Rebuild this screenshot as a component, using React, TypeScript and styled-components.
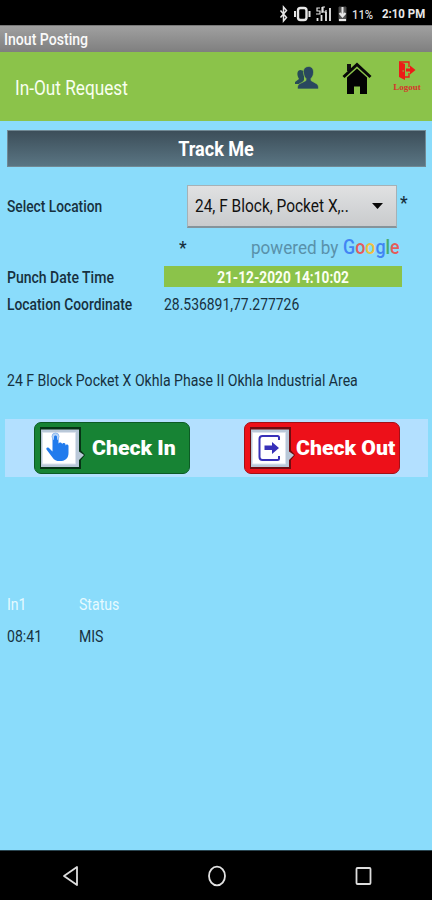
import React from "react";
import styled, { createGlobalStyle } from "styled-components";

const GlobalStyle = createGlobalStyle`
  * { box-sizing: border-box; }
  body { margin: 0; background: #8adcfb; font-family: Roboto, "Liberation Sans", sans-serif; }
  svg { display: block; flex: none; }
`;

const Screen = styled.div`
  width: 432px;
  height: 900px;
  display: flex;
  flex-direction: column;
  background: #8adcfb;
  overflow: hidden;
`;

/* Condensed label: the type is narrower than the regular Roboto cut. */
const Label = styled.span<{
  $size: number;
  $fit: number;
  $weight?: number;
  $color?: string;
  $origin?: string;
}>`
  display: inline-block;
  white-space: nowrap;
  line-height: 1.2;
  font-size: ${(p) => p.$size}px;
  font-weight: ${(p) => p.$weight ?? 400};
  color: ${(p) => p.$color ?? "#17313f"};
  transform: scaleX(${(p) => p.$fit});
  transform-origin: ${(p) => p.$origin ?? "left"} center;
`;

const StatusBar = styled.div`
  height: 25px;
  flex: none;
  background: #000;
  display: flex;
  align-items: center;
  padding: 2px 0 0 278px;
`;
const StatusText = styled.div<{ $w: number }>`
  width: ${(p) => p.$w}px;
  padding-left: 2px;
`;
const TitleBar = styled.div`
  height: 27px;
  flex: none;
  background: linear-gradient(#a0a0a0, #7f7f7f);
  border-top: 1px solid #777;
  padding: 4px 0 0 4px;
`;
const Header = styled.header`
  height: 69px;
  flex: none;
  background: #8bc34a;
  display: flex;
  align-items: flex-start;
  padding-left: 15px;
`;
const HeaderTitle = styled.div`
  width: 279px;
  padding-top: 24px;
`;
const HeaderIcon = styled.div<{ $w: number; $top: number }>`
  width: ${(p) => p.$w}px;
  padding-top: ${(p) => p.$top}px;
`;
const LogoutIcon = styled.div`
  width: 30px;
  padding-top: 9px;
  display: flex;
  flex-direction: column;
  align-items: center;
`;
const LogoutText = styled.span`
  font: bold 9px/14px "Liberation Serif", serif;
  color: #d6362a;
`;

const Content = styled.main`
  flex: 1;
  min-height: 0;
`;
const Banner = styled.div`
  height: 37px;
  margin: 9px 6px 0 7px;
  padding-top: 2px;
  border: 1px solid #718994;
  background: linear-gradient(#3c4e59, #5a7583);
  display: flex;
  align-items: center;
  justify-content: center;
`;
const Row = styled.div<{ $h: number; $mt?: number }>`
  display: flex;
  align-items: center;
  height: ${(p) => p.$h}px;
  margin-top: ${(p) => p.$mt ?? 0}px;
  padding-left: 7px;
`;
const Cell = styled.div<{ $w: number; $pt?: number }>`
  width: ${(p) => p.$w}px;
  padding-top: ${(p) => p.$pt ?? 0}px;
  flex: none;
`;
const Select = styled.div`
  width: 210px;
  height: 43px;
  flex: none;
  border: 1px solid #a5b1b6;
  border-bottom: 2px solid #85939a;
  background: linear-gradient(#e0e1e2, #c9cbcd);
  display: flex;
  align-items: center;
  padding-left: 7px;
`;
const Stamp = styled.div`
  width: 238px;
  height: 21px;
  padding-top: 3px;
  background: #8bc34a;
  display: flex;
  align-items: center;
  justify-content: center;
`;
const Star = styled.div`
  padding: 7px 0 0 3px;
  align-self: flex-start;
`;
const Actions = styled.div`
  height: 58px;
  margin: 26px 4px 0 5px;
  padding: 3px 28px 0 29px;
  background: #b3e0ff;
  display: flex;
  justify-content: space-between;
`;
const ActionButton = styled.button<{ $bg: string; $edge: string; $gap: number }>`
  width: 156px;
  height: 52px;
  padding: 0 0 0 4px;
  border: 1.5px solid ${(p) => p.$edge};
  border-radius: 7px;
  background: ${(p) => p.$bg};
  display: flex;
  align-items: center;
  gap: ${(p) => p.$gap}px;
  font-family: inherit;
`;
const ActionLabel = styled.span<{ $fit: number }>`
  font: 900 21px/24px Roboto, sans-serif;
  color: #fff;
  white-space: nowrap;
  transform: scaleX(${(p) => p.$fit});
  transform-origin: left center;
`;
const NavBar = styled.nav`
  height: 50px;
  flex: none;
  background: #000;
  border-top: 1px solid #2a4550;
  display: flex;
  align-items: center;
  padding-left: 62px;
  gap: 128px;
`;

const google: [string, string][] = [
  ["G", "#4285f4"],
  ["o", "#e35d5b"],
  ["o", "#f0bf3f"],
  ["g", "#4285f4"],
  ["l", "#45ad70"],
  ["e", "#e35d5b"],
];
const Tint = styled.span<{ $c: string }>`
  color: ${(p) => p.$c};
`;

const StatusIcons = () => (
  <svg width="72" height="20" viewBox="0 0 72 20" fill="none" stroke="#e6e6e6">
    <path d="M2.500 6.500l6 7-3 3.500V3l3 3.500-6 7" strokeWidth="1.5" />
    <rect x="20" y="4" width="8.500" height="12" rx="2.500" strokeWidth="2.4" />
    <path d="M17 7v6M31.500 7v6" strokeWidth="2" />
    <path d="M42 4h-3v3h3v3h-4M44 3v6M47 3h-2v5h3V6" strokeWidth="1.200" />
    <path d="M39.500 17v-3M43.500 17v-6M48 17V8M52 17V4" strokeWidth="1.800" />
    <path d="M61 3h7v14h-7z" fill="#555" stroke="#444" strokeWidth="1" />
    <path d="M64.500 3v9M61.500 9l3 3.500 3-3.500M61 16h7" strokeWidth="2" />
  </svg>
);

const PeopleIcon = () => (
  <svg width="26" height="26" viewBox="0 0 26 26">
    <path d="M6.500 5C3 5 3 9 4 12l1 2-4 3v2h6l3-4V6z" fill="#274b57" />
    <path
      d="M14.500 1.500c-4 0-5.500 3-5 6.500.3 3 1.500 4.500 2.500 5.500v2l-7 3.500c-1.500 1-1.500 3-1.500 5h21c0-2 0-4-1.500-5l-6-3.500v-2c1.500-1.500 2.500-3.500 2.500-6 .2-3.500-1.500-6-5-6z"
      fill="#29475f" stroke="#8bc34a" strokeWidth=".7"
    />
  </svg>
);

const HomeIcon = () => (
  <svg width="30" height="34" viewBox="0 0 30 34">
    <path d="M5 4h4v7H5z" fill="#111" />
    <path d="M1.500 17L15 4.500 28.500 17" fill="none" stroke="#080808" strokeWidth="3" />
    <path d="M5 17.500L15 8.500l10 9V34h-7v-7.500h-6V34H5z" fill="#030303" />
  </svg>
);

const DoorIcon = () => (
  <svg width="18" height="19" viewBox="0 0 18 19">
    <path d="M1 1h10v5M11 12v4H6" fill="none" stroke="#ed1c17" strokeWidth="1.300" />
    <path d="M1 .5l6 2.500v16l-6-3z" fill="#ed1c17" />
    <path d="M8 7.500h4V4.500l5.500 4.500-5.500 4.500v-3H8z" fill="#ed1c17" />
    <circle cx="5.200" cy="10" r=".8" fill="#8bc34a" />
  </svg>
);

const Frame = ({ edge, children }: { edge: string; children: React.ReactNode }) => (
  <svg width="46" height="44" viewBox="0 0 46 44">
    <path d="M1 1h41v23.500l4 4.500-4 5v9H1z" fill={edge} />
    <path d="M2 3.500h38v22l5 3.500-5 5V41H2z" fill="#b9c8d8" />
    <path d="M3.500 6.500h33V38h-33z" fill="#fff" stroke="#dce3ed" />
    {children}
  </svg>
);

const App = () => (
  <>
    <GlobalStyle />
    <Screen>
      <StatusBar>
        <StatusIcons />
        <StatusText $w={32}>
          <Label $size={13} $weight={500} $fit={0.87} $color="#ddd">11%</Label>
        </StatusText>
        <Label $size={13} $weight={700} $fit={0.88} $color="#e8e8e8">2:10 PM</Label>
      </StatusBar>
      <TitleBar>
        <Label $size={16} $weight={500} $fit={0.88} $color="#fafafa">Inout Posting</Label>
      </TitleBar>
      <Header>
        <HeaderTitle>
          <Label $size={21} $fit={0.82} $color="#f8fff0">In-Out Request</Label>
        </HeaderTitle>
        <HeaderIcon $w={48} $top={13}><PeopleIcon /></HeaderIcon>
        <HeaderIcon $w={50} $top={8}><HomeIcon /></HeaderIcon>
        <LogoutIcon>
          <DoorIcon />
          <LogoutText>Logout</LogoutText>
        </LogoutIcon>
      </Header>
      <Content>
        <Banner>
          <Label $size={21} $weight={700} $fit={0.86} $color="#fff" $origin="center">Track Me</Label>
        </Banner>
        <Row $h={43} $mt={18}>
          <Cell $w={180}>
            <Label $size={16} $weight={500} $fit={0.86}>Select Location</Label>
          </Cell>
          <Select>
            <Cell $w={177}>
              <Label $size={18.5} $fit={0.835} $color="#111">24, F Block, Pocket X,..</Label>
            </Cell>
            <svg width="11" height="7" viewBox="0 0 11 7"><path d="M0 0h11L5.500 6z" fill="#080808" /></svg>
          </Select>
          <Star><Label $size={18} $weight={500} $fit={0.95}>*</Label></Star>
        </Row>
        <Row $h={26} $mt={7}>
          <Cell $w={172} />
          <Cell $w={72}><Label $size={18} $weight={500} $fit={0.95}>*</Label></Cell>
          <Cell $w={92}>
            <Label $size={19} $fit={0.9} $color="#5991aa">powered by</Label>
          </Cell>
          <Label $size={21} $weight={500} $fit={0.85}>
            {google.map(([ch, c], i) => <Tint key={i} $c={c}>{ch}</Tint>)}
          </Label>
        </Row>
        <Row $h={21} $mt={5}>
          <Cell $w={157} $pt={2}>
            <Label $size={16} $weight={500} $fit={0.875}>Punch Date Time</Label>
          </Cell>
          <Stamp>
            <Label $size={16} $weight={700} $fit={0.855} $color="#fbfff2" $origin="center">21-12-2020 14:10:02</Label>
          </Stamp>
        </Row>
        <Row $h={24} $mt={6}>
          <Cell $w={157}>
            <Label $size={16} $weight={500} $fit={0.865}>Location Coordinate</Label>
          </Cell>
          <Label $size={16} $fit={0.87}>28.536891,77.277726</Label>
        </Row>
        <Row $h={24} $mt={52}>
          <Label $size={16} $fit={0.88}>24 F Block Pocket X Okhla Phase II Okhla Industrial Area</Label>
        </Row>
        <Actions>
          <ActionButton $bg="#178334" $edge="#0c5b25" $gap={7}>
            <Frame edge="#063315">
              <path
                d="M13.500 10.500v15L10 22c-2-1-3 0-2.500 1.500l6 8c2 3 5 4 9 3.500 5-.5 7-4 7-8v-7c0-2-3-2-3 0v-1.500c0-2-3.500-2-3.500 0V18c0-2-3.500-2-3.500 0v-7.500c0-3.500-6-3.500-6 0z"
                fill="#217bed"
              />
              <circle cx="16.500" cy="10.500" r="3.500" fill="#b9d5f6" stroke="#8cb9ef" />
              <path d="M15 11c0-2 3-2 3 0v6h-3z" fill="#217bed" />
            </Frame>
            <ActionLabel $fit={1.01}>Check In</ActionLabel>
          </ActionButton>
          <ActionButton $bg="#ed1019" $edge="#a50f16" $gap={1}>
            <Frame edge="#700c10">
              <path
                d="M30 14V11.500c0-1-.5-1.500-1.500-1.500h-15c-2 0-3 1-3 3v18c0 2 1 3 3 3h15c1 0 1.500-.5 1.500-1.500V30"
                fill="none" stroke="#3730b8" strokeWidth="2"
              />
              <path d="M15.500 19.500H23V16l7 6-7 6v-4h-7.500z" fill="#3730b8" />
            </Frame>
            <ActionLabel $fit={1.01}>Check Out</ActionLabel>
          </ActionButton>
        </Actions>
        <Row $h={24} $mt={116}>
          <Cell $w={72}><Label $size={16} $fit={0.88} $color="#e6faff">In1</Label></Cell>
          <Label $size={16} $fit={0.88} $color="#e6faff">Status</Label>
        </Row>
        <Row $h={24} $mt={8}>
          <Cell $w={72}><Label $size={16} $fit={0.88}>08:41</Label></Cell>
          <Label $size={16} $fit={0.88}>MIS</Label>
        </Row>
      </Content>
      <NavBar>
        <svg width="17" height="22" viewBox="0 0 17 22">
          <path d="M15 2v18L2 11z" fill="none" stroke="#ddd" strokeWidth="1.800" strokeLinejoin="round" />
        </svg>
        <svg width="20" height="22" viewBox="0 0 20 22">
          <ellipse cx="10" cy="11" rx="8" ry="9.300" fill="none" stroke="#e2e2e2" strokeWidth="1.800" />
        </svg>
        <svg width="18" height="20" viewBox="0 0 18 20">
          <rect x="1.500" y="2" width="14" height="16" rx="1" fill="none" stroke="#ddd" strokeWidth="1.800" />
        </svg>
      </NavBar>
    </Screen>
  </>
);

export default App;
